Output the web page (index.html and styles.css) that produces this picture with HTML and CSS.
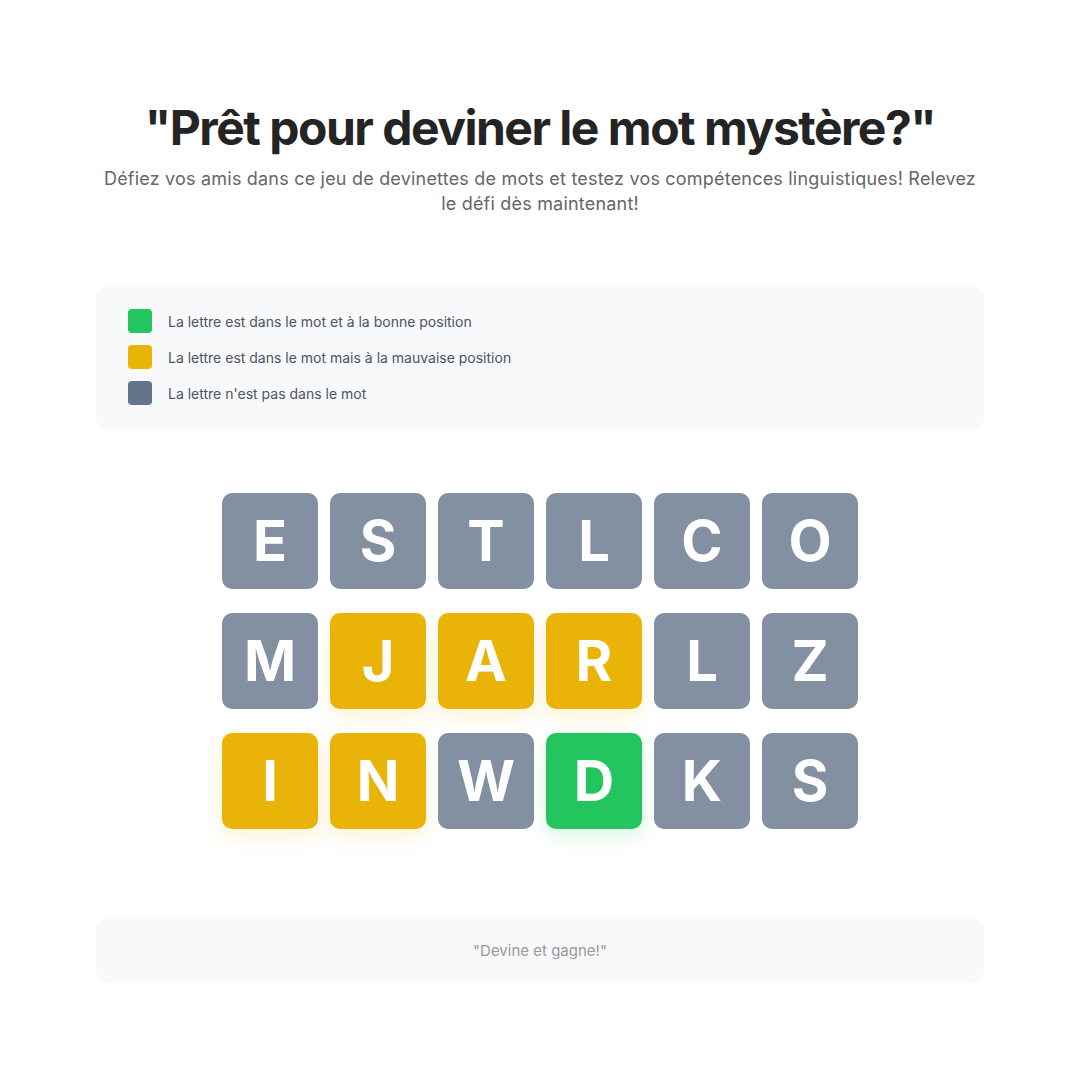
FILE: index.html
```html
<!DOCTYPE html>
<html lang="fr">
<head>
<meta charset="utf-8">
<title>Devine le mot</title>
<link rel="stylesheet" href="styles.css">
</head>
<body>
<main class="page">
  <header class="hero">
    <h1 class="title">"Prêt pour deviner le mot mystère?"</h1>
    <p class="subtitle">Défiez vos amis dans ce jeu de devinettes de mots et testez vos compétences linguistiques! Relevez le défi dès maintenant!</p>
  </header>

  <section class="legend">
    <div class="legend-row"><span class="swatch swatch-green"></span><span class="legend-text">La lettre est dans le mot et à la bonne position</span></div>
    <div class="legend-row"><span class="swatch swatch-yellow"></span><span class="legend-text">La lettre est dans le mot mais à la mauvaise position</span></div>
    <div class="legend-row"><span class="swatch swatch-gray"></span><span class="legend-text">La lettre n'est pas dans le mot</span></div>
  </section>

  <section class="board">
    <div class="board-row">
      <div class="tile tile-gray">E</div>
      <div class="tile tile-gray">S</div>
      <div class="tile tile-gray">T</div>
      <div class="tile tile-gray">L</div>
      <div class="tile tile-gray">C</div>
      <div class="tile tile-gray">O</div>
    </div>
    <div class="board-row">
      <div class="tile tile-gray">M</div>
      <div class="tile tile-yellow">J</div>
      <div class="tile tile-yellow">A</div>
      <div class="tile tile-yellow">R</div>
      <div class="tile tile-gray">L</div>
      <div class="tile tile-gray">Z</div>
    </div>
    <div class="board-row">
      <div class="tile tile-yellow">I</div>
      <div class="tile tile-yellow">N</div>
      <div class="tile tile-gray">W</div>
      <div class="tile tile-green">D</div>
      <div class="tile tile-gray">K</div>
      <div class="tile tile-gray">S</div>
    </div>
  </section>

  <footer class="footer">"Devine et gagne!"</footer>
</main>
</body>
</html>
```

FILE: styles.css
```css
* { box-sizing: border-box; }
html, body { margin: 0; padding: 0; background: #ffffff; }
body { font-family: Inter, "Noto Sans", "Liberation Sans", sans-serif; }

.page {
  width: 888px;
  margin: 0 auto;
  padding-top: 98px;
  display: flex;
  flex-direction: column;
}

.hero { text-align: center; }
.title {
  margin: 0;
  font-size: 48px;
  line-height: 60px;
  font-weight: 700;
  color: #242424;
  letter-spacing: -1.5px;
}
.subtitle {
  margin: 8px 0 0;
  font-size: 18px;
  line-height: 25px;
  color: #666666;
  letter-spacing: 0.2px;
}

.legend {
  margin-top: 69px;
  background: #f8f9fa;
  border-radius: 12px;
  padding: 24px 32px;
  display: flex;
  flex-direction: column;
  gap: 12px;
}
.legend-row { display: flex; align-items: center; gap: 16px; }
.swatch { width: 24px; height: 24px; border-radius: 4px; flex: none; }
.swatch-green { background: #22c55e; }
.swatch-yellow { background: #eab308; }
.swatch-gray { background: #64748b; }
.legend-text { font-size: 14px; color: #4b5563; }

.board {
  margin-top: 64px;
  display: flex;
  flex-direction: column;
  align-items: center;
  gap: 24px;
}
.board-row { display: flex; gap: 12px; }
.tile {
  width: 96px;
  height: 96px;
  border-radius: 10px;
  display: flex;
  align-items: center;
  justify-content: center;
  color: #ffffff;
  font-size: 56px;
  font-weight: 700;
}
.tile-gray { background: #8390a2; }
.tile-yellow { background: #eab308; box-shadow: 0 8px 20px rgba(234, 179, 8, 0.16); }
.tile-green { background: #22c55e; box-shadow: 0 8px 20px rgba(34, 197, 94, 0.16); }

.footer {
  margin-top: 88px;
  background: #f8f9fa;
  border-radius: 12px;
  height: 66px;
  display: flex;
  align-items: center;
  justify-content: center;
  font-size: 15px;
  color: #999999;
}
```
